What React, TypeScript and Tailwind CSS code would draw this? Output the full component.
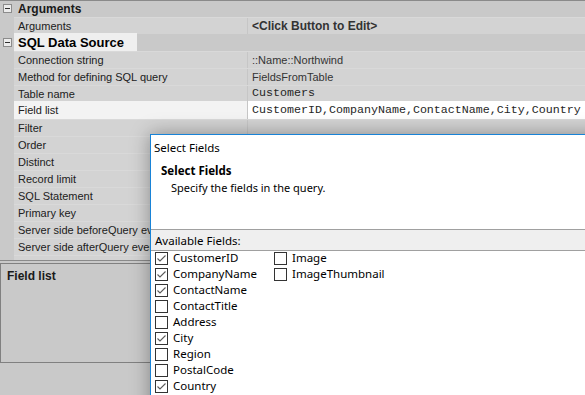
import React from 'react';

type Prop = { label: string; value?: string; mono?: boolean; bold?: boolean; selected?: boolean };

const argsRows: Prop[] = [{ label: 'Arguments', value: '<Click Button to Edit>', bold: true }];

const sqlRows: Prop[] = [
  { label: 'Connection string', value: '::Name::Northwind' },
  { label: 'Method for defining SQL query', value: 'FieldsFromTable' },
  { label: 'Table name', value: 'Customers', mono: true },
  { label: 'Field list', value: 'CustomerID,CompanyName,ContactName,City,Country', mono: true, selected: true },
  { label: 'Filter' },
  { label: 'Order' },
  { label: 'Distinct' },
  { label: 'Record limit' },
  { label: 'SQL Statement' },
  { label: 'Primary key' },
  { label: 'Server side beforeQuery event' },
  { label: 'Server side afterQuery event' },
  { label: 'Expression columns' },
];

const col1: [string, boolean][] = [
  ['CustomerID', true],
  ['CompanyName', true],
  ['ContactName', true],
  ['ContactTitle', false],
  ['Address', false],
  ['City', true],
  ['Region', false],
  ['PostalCode', false],
  ['Country', true],
  ['Phone', false],
];

const col2: [string, boolean][] = [
  ['Image', false],
  ['ImageThumbnail', false],
];

function MinusBox() {
  return (
    <div className="w-[9px] h-[9px] border border-[#8c8c8c] bg-[#ececec] flex items-center justify-center">
      <div className="w-[5px] h-px bg-[#303030]" />
    </div>
  );
}

function Category({ label, highlight }: { label: string; highlight?: boolean }) {
  return (
    <div className="flex h-[17px] bg-[#c9c9c9]">
      <div className="w-[14px] flex items-center justify-center">
        <MinusBox />
      </div>
      <div
        className={
          highlight
            ? 'w-[123px] h-[19px] -mt-px bg-[#efefef] pl-[4px] flex items-center font-bold text-[13px] text-black'
            : 'pl-[4px] flex items-center font-bold text-[12px] text-[#1a1a1a]'
        }
      >
        {label}
      </div>
    </div>
  );
}

function Row({ label, value, mono, bold, selected }: Prop) {
  return (
    <div className="flex h-[17px] bg-[#c9c9c9]">
      <div className="w-[14px]" />
      <div
        className={
          selected
            ? 'flex flex-1 h-[19px] -mt-px bg-[#f3f3f3]'
            : 'flex flex-1 border-t border-[#d9d9d9] bg-[#d3d3d3]'
        }
      >
        <div className="w-[234px] pl-[4px] flex items-center text-[#202020] border-r border-[#c6c6c6] whitespace-nowrap overflow-hidden">
          {label}
        </div>
        <div
          className={
            (selected ? 'bg-white ' : '') +
            'flex-1 pl-[4px] flex items-center whitespace-nowrap overflow-hidden ' +
            (mono ? "font-['Liberation_Mono',monospace] text-[11.67px] text-[#262626] " : 'text-[#333] ') +
            (bold ? 'font-bold text-[12px] text-[#1a1a1a]' : '')
          }
        >
          {value}
        </div>
      </div>
    </div>
  );
}

function Check({ label, checked }: { label: string; checked: boolean }) {
  return (
    <div className="flex items-center h-[16px] gap-[5px]">
      <div className="w-[13px] h-[13px] border border-[#333] bg-white shrink-0">
        {checked && (
          <svg width="11" height="11" viewBox="0 0 11 11">
            <polyline points="1.5,5.5 4,8 9.5,2.5" fill="none" stroke="#5a5a5a" strokeWidth="1.1" />
          </svg>
        )}
      </div>
      <span className="whitespace-nowrap">{label}</span>
    </div>
  );
}

export default function App() {
  return (
    <div className="w-[585px] h-[395px] relative overflow-hidden bg-[#c9c9c9] font-['Liberation_Sans',Arial,sans-serif] text-[11px]">
      {/* property grid */}
      <div className="h-[261px] overflow-hidden border-b border-[#8a8a8a] relative">
        <div className="absolute top-0 left-0 right-0 h-px bg-[#8a8a8a]" />
        <Category label="Arguments" />
        {argsRows.map((r) => (
          <Row key={r.label} {...r} />
        ))}
        <Category label="SQL Data Source" highlight />
        {sqlRows.map((r) => (
          <Row key={r.label} {...r} />
        ))}
      </div>

      {/* help panel */}
      <div className="mt-[2px] h-[100px] border border-[#808080] px-[6px] pt-[3px]">
        <div className="font-bold text-[12px] text-[#1a1a1a]">Field list</div>
      </div>

      {/* Select Fields dialog */}
      <div className="absolute left-[150px] top-[134px] w-[460px] h-[300px] bg-white border border-[#1883d7] shadow-[0_0_18px_rgba(0,0,0,0.35)] font-['Noto_Sans','Liberation_Sans',sans-serif] text-[11.5px] text-black flex flex-col">
        <div className="h-[26px] pl-[3px] flex items-center">Select Fields</div>
        <div className="h-[68px] pl-[10px] pt-[1px]">
          <div className="font-bold leading-[18px]">Select Fields</div>
          <div className="pl-[10px] leading-[16px] text-[11px]">Specify the fields in the query.</div>
        </div>
        <div className="h-[21px] border-t border-[#a0a0a0] bg-[#efefef] pl-[4px] pt-[3px] leading-[16px]">
          Available Fields:
        </div>
        <div className="flex-1 border-t border-[#a0a0a0] bg-white pl-[4px] flex">
          <div className="w-[119px] -mt-px">
            {col1.map(([l, c]) => (
              <Check key={l} label={l} checked={c} />
            ))}
          </div>
          <div className="-mt-px">
            {col2.map(([l, c]) => (
              <Check key={l} label={l} checked={c} />
            ))}
          </div>
        </div>
      </div>
    </div>
  );
}
